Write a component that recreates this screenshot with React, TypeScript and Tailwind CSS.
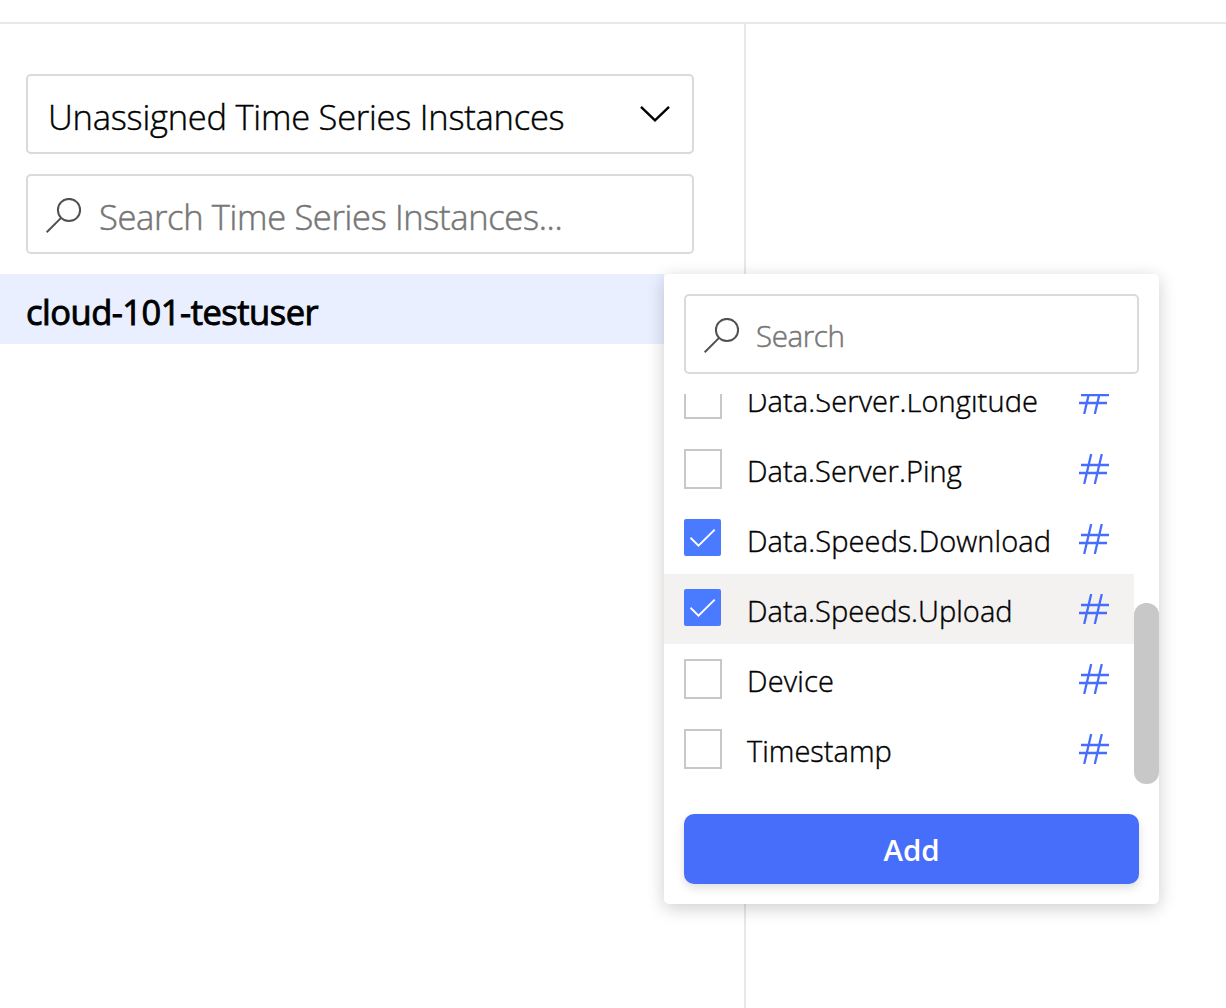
import React from "react";

type Field = { name: string; checked?: boolean; active?: boolean; spacing: string };

const fields: Field[] = [
  { name: "Data.Server.Longitude", spacing: "tracking-[0.1px]" },
  { name: "Data.Server.Ping", spacing: "tracking-[0.05px]" },
  { name: "Data.Speeds.Download", checked: true, spacing: "tracking-[0.1px]" },
  { name: "Data.Speeds.Upload", checked: true, active: true, spacing: "tracking-[0.05px]" },
  { name: "Device", spacing: "tracking-[0.2px]" },
  { name: "Timestamp", spacing: "tracking-[0px]" },
];

function SearchIcon({ className }: { className: string }) {
  return (
    <svg className={className} width="36" height="36" viewBox="0 0 36 36" fill="none" stroke="#505050" strokeWidth="2">
      <circle cx="23" cy="12" r="11.1" />
      <path d="M15.1 19.9 0.7 34.3" />
    </svg>
  );
}

function HashIcon() {
  return (
    <svg className="mt-5 shrink-0" width="30" height="30" viewBox="0 0 30 30" fill="none" stroke="#466efa" strokeWidth="2.3">
      <path d="M12.2 0 5.2 30M22.8 0 15.8 30M2 11h28M0 19h28" />
    </svg>
  );
}

function Checkbox({ checked }: { checked?: boolean }) {
  if (!checked) return <span className="mt-[15px] h-10 w-[38px] shrink-0 border-2 border-[#c8c8c8] bg-white" />;
  return (
    <span className="mt-[15px] mr-px h-[37px] w-[37px] shrink-0 rounded-[2px] bg-[#4a7aff]">
      <svg width="37" height="37" viewBox="0 0 37 37" fill="none" stroke="#fff" strokeWidth="1.9">
        <path d="M6.5 18.8 14.5 26.6 30.7 10.6" />
      </svg>
    </span>
  );
}

function FieldPicker() {
  return (
    <div className="absolute top-0 left-[664px] z-10 flex h-[630px] w-[495px] flex-col rounded-[5px] bg-white pt-5 shadow-[0_4px_18px_rgba(0,0,0,0.2)]">
      <div className="mx-5 flex h-20 shrink-0 rounded-[5px] border-2 border-[#dadada] pl-[18px]">
        <SearchIcon className="mt-[22px] shrink-0" />
        <span className="ml-4 pt-[20px] text-[29.5px] leading-[40px] font-light tracking-[-0.4px] text-[#767676] [-webkit-text-stroke:0.5px_#767676]">Search</span>
      </div>
      <div className="mt-5 flex h-[390px] shrink-0">
        <div className="flex h-full w-[470px] flex-col justify-end overflow-hidden">
          {fields.map((f) => (
            <div key={f.name} className={f.active ? "flex h-[70px] shrink-0 bg-[#f3f2f1] pr-[25px] pl-5" : "flex h-[70px] shrink-0 pr-[25px] pl-5"}>
              <Checkbox checked={f.checked} />
              <span className={`ml-[25px] flex-1 pt-[18px] text-[29px] leading-[38px] font-light whitespace-nowrap text-black [-webkit-text-stroke:0.4px_#000] ${f.spacing}`}>{f.name}</span>
              <HashIcon />
            </div>
          ))}
        </div>
        <div className="mt-[209px] h-[181px] w-[25px] rounded-[12px] bg-[#c8c8c8]" />
      </div>
      <button className="mx-5 mt-[30px] h-[70px] shrink-0 rounded-[10px] bg-[#466efa] pt-[1px] text-[29.5px] leading-[40px] font-semibold text-white shadow-[0_4px_10px_rgba(0,0,0,0.13)]">
        Add
      </button>
    </div>
  );
}

export default function App() {
  return (
    <div className="flex h-[1008px] w-[1226px] flex-col overflow-hidden bg-white font-['Open_Sans','Noto_Sans',sans-serif]">
      <div className="h-6 shrink-0 border-b-2 border-[#e8e8e8]" />
      <div className="flex flex-1">
        <aside className="relative flex w-[746px] flex-col border-r-2 border-[#e8e8e8] pt-[50px]">
          <div className="ml-[26px] flex h-20 w-[668px] shrink-0 justify-between rounded-[5px] border-2 border-[#dadada] pr-[22.5px] pl-[18px]">
            <span className="pt-[17px] pl-[2px] text-[34.5px] leading-[48px] font-light tracking-[-0.24px] whitespace-nowrap text-black [-webkit-text-stroke:0.4px_#000]">Unassigned Time Series Instances</span>
            <svg className="mt-[29px]" width="30" height="18" viewBox="0 0 30 18" fill="none" stroke="#000" strokeWidth="2.4">
              <path d="M1 1.8 15 15.4 29 1.8" />
            </svg>
          </div>
          <div className="mt-5 ml-[26px] flex h-20 w-[668px] shrink-0 rounded-[5px] border-2 border-[#dadada] pl-[18px]">
            <SearchIcon className="mt-[22px] shrink-0" />
            <span className="ml-[17px] pt-[17px] text-[34.5px] leading-[48px] font-light tracking-[-0.34px] whitespace-nowrap text-[#767676] [-webkit-text-stroke:0.5px_#767676]">Search Time Series Instances...</span>
          </div>
          <div className="relative mt-5 h-[70px] shrink-0">
            <div className="mr-[80px] h-[70px] bg-[#e9efff] pt-[14px] pl-[26px] text-[34.5px] leading-[48px] font-normal tracking-[-0.5px] text-black [-webkit-text-stroke:0.9px_#000]">
              cloud-101-testuser
            </div>
            <FieldPicker />
          </div>
        </aside>
        <main className="flex-1" />
      </div>
    </div>
  );
}
